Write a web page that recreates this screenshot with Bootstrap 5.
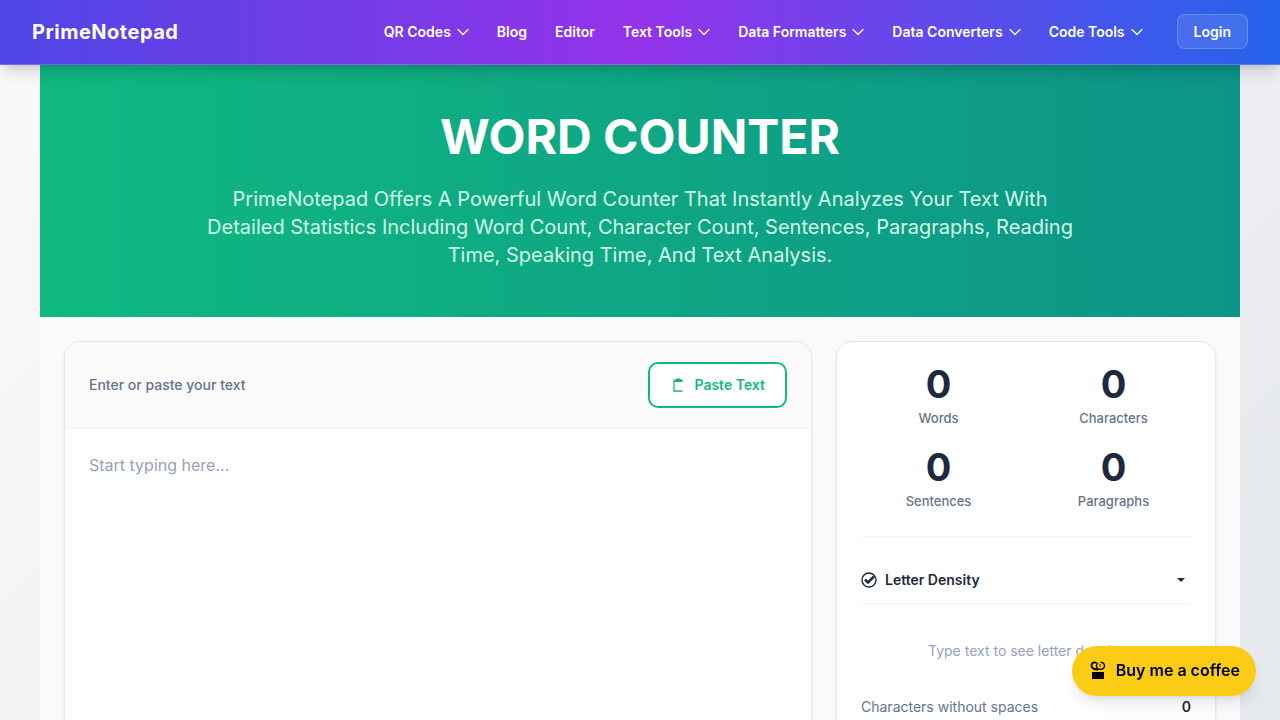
<!DOCTYPE html>
<html lang="en">
<head>
<meta charset="utf-8">
<meta name="viewport" content="width=device-width, initial-scale=1">
<title>Word Counter - PrimeNotepad</title>
<link href="https://cdn.jsdelivr.net/npm/bootstrap@5.3.0/dist/css/bootstrap.min.css" rel="stylesheet">
<style>
  body { font-family: Inter, "Liberation Sans", sans-serif; color: #1e293b; background: linear-gradient(135deg, #fafafa 0%, #e5e8ec 100%); background-attachment: fixed; min-height: 100vh; }
  .site-nav { background: linear-gradient(90deg, #4f46e5, #9333ea 50%, #2563eb); border-bottom: 1px solid rgba(255,255,255,.2); box-shadow: 0 10px 15px -3px rgba(0,0,0,.14), 0 4px 6px -4px rgba(0,0,0,.14); padding: 14px 32px 15px; }
  .site-nav .navbar-brand { font-size: 20px; line-height: 28px; font-weight: 700; letter-spacing: .5px; color: #fff; padding: 0; }
  .menu-link { font-size: 14px; line-height: 20px; font-weight: 600; color: #fff; text-decoration: none; gap: 6px; }
  .menu-list { gap: 28px; }
  .login-btn { font-size: 14px; line-height: 20px; font-weight: 600; color: #fff; padding: 7px 16px 6px; margin-left: 6px; border: 1px solid rgba(255,255,255,.2); border-radius: 8px; background: rgba(255,255,255,.1); }
  .page-shell { max-width: 1200px; background: #f8fafc; }
  .hero { background: linear-gradient(90deg, #10b981, #0d9488); padding: 40px 24px 48px; }
  .hero h1 { font-size: 48px; line-height: 64px; font-weight: 700; }
  .hero p { font-size: 20px; line-height: 28px; color: #d1fae5; max-width: 896px; }
  .tool-panel { border: 1px solid #e5e7eb; border-radius: 16px; box-shadow: 0 1px 3px rgba(0,0,0,.08); background: #fff; }
  .side-col { width: 380px; }
  .editor-head { background: #fafafa; border-bottom: 1px solid #f1f5f9; padding: 20px 24px; }
  .editor-head label { font-size: 14px; line-height: 20px; font-weight: 500; color: #64748b; }
  .paste-btn { font-size: 14px; line-height: 20px; font-weight: 600; color: #10b981; background: #fff; border: 2px solid #10b981; border-radius: 10px; padding: 11px 20px; gap: 8px; }
  .editor-text { min-height: 500px; padding: 24px; font-size: 16px; line-height: 24px; resize: none; outline: 0; }
  .editor-text::placeholder { color: #94a3b8; }
  .stat-num { font-size: 38px; line-height: 36px; font-weight: 700; }
  .stat-name { font-size: 13px; line-height: 19px; font-weight: 500; color: #64748b; margin-top: 7px; }
  .stats-block { padding-bottom: 24px; border-bottom: 1px solid #f1f5f9; }
  .stats-grid { --bs-gutter-x: 20px; row-gap: 21px; padding-bottom: 1px; }
  .density-btn { font-size: 14px; line-height: 20px; font-weight: 600; color: #1e293b; background: transparent; border: 0; border-bottom: 1px solid #f1f5f9; padding: 13px 0; margin-top: 20px; }
  .density-empty { font-size: 14px; line-height: 20px; color: #94a3b8; padding: 37px 0 36px; }
  .detail-row { font-size: 14px; line-height: 20px; color: #64748b; }
  .detail-row dt { font-weight: 400; }
  .detail-row dd { font-weight: 600; color: #1e293b; }
  .coffee-btn { right: 24px; bottom: 24px; z-index: 1040; font-size: 16px; line-height: 24px; font-weight: 600; color: #000; background: #facc15; padding: 12px 16px 14px; gap: 8px; box-shadow: 0 10px 15px -3px rgba(0,0,0,.1), 0 4px 6px -4px rgba(0,0,0,.1); }
</style>
</head>
<body>
<svg class="d-none">
  <symbol id="chevron" viewBox="0 0 12 12"><path d="M1 3.5l5 5 5-5" fill="none" stroke="currentColor" stroke-width="1.3" stroke-linecap="round" stroke-linejoin="round"/></symbol>
</svg>
<nav class="site-nav sticky-top d-flex align-items-center justify-content-between">
  <a class="navbar-brand m-0" href="#">PrimeNotepad</a>
  <div class="menu-list d-flex align-items-center">
    <a class="menu-link d-flex align-items-center" href="#">QR Codes <svg width="12" height="12"><use href="#chevron"/></svg></a>
    <a class="menu-link" href="#">Blog</a>
    <a class="menu-link" href="#">Editor</a>
    <a class="menu-link d-flex align-items-center" href="#">Text Tools <svg width="12" height="12"><use href="#chevron"/></svg></a>
    <a class="menu-link d-flex align-items-center" href="#">Data Formatters <svg width="12" height="12"><use href="#chevron"/></svg></a>
    <a class="menu-link d-flex align-items-center" href="#">Data Converters <svg width="12" height="12"><use href="#chevron"/></svg></a>
    <a class="menu-link d-flex align-items-center" href="#">Code Tools <svg width="12" height="12"><use href="#chevron"/></svg></a>
    <button class="login-btn" type="button">Login</button>
  </div>
</nav>
<main class="page-shell mx-auto">
  <header class="hero text-center text-white">
    <h1 class="mb-3">WORD COUNTER</h1>
    <p class="mx-auto mb-0">PrimeNotepad Offers A Powerful Word Counter That Instantly Analyzes Your Text With Detailed Statistics Including Word Count, Character Count, Sentences, Paragraphs, Reading Time, Speaking Time, And Text Analysis.</p>
  </header>
  <div class="d-flex gap-4 p-4">
    <section class="tool-panel flex-grow-1 overflow-hidden d-flex flex-column">
      <div class="editor-head d-flex align-items-center justify-content-between">
        <label for="words">Enter or paste your text</label>
        <button class="paste-btn d-flex align-items-center" type="button">
          <svg width="16" height="16" viewBox="0 0 16 16" fill="none" stroke="currentColor"><path d="M12 5V3.500H4v10.500h8.500" stroke-width="1.300"/><path d="M5 5V3l2-1.500h3L12 3v2z" fill="currentColor" stroke="none"/></svg>
          Paste Text
        </button>
      </div>
      <textarea id="words" class="editor-text w-100 border-0 flex-grow-1 d-block" placeholder="Start typing here..."></textarea>
    </section>
    <aside class="tool-panel side-col flex-shrink-0 p-4">
      <div class="stats-block">
        <div class="stats-grid row text-center">
          <div class="col-6"><div class="stat-num">0</div><div class="stat-name">Words</div></div>
          <div class="col-6"><div class="stat-num">0</div><div class="stat-name">Characters</div></div>
          <div class="col-6"><div class="stat-num">0</div><div class="stat-name">Sentences</div></div>
          <div class="col-6"><div class="stat-num">0</div><div class="stat-name">Paragraphs</div></div>
        </div>
      </div>
      <button class="density-btn w-100 d-flex align-items-center gap-2" type="button">
        <svg width="16" height="16" viewBox="0 0 16 16" fill="none" stroke="currentColor"><circle cx="8" cy="8" r="7" stroke-width="1.4"/><path d="M4 7.500l3 3L13 4.500" stroke-width="2.500"/></svg>
        Letter Density
        <svg class="ms-auto me-1" width="12" height="12" viewBox="0 0 12 12"><path d="M2 4h8L6 8z" fill="currentColor"/></svg>
      </button>
      <p class="density-empty text-center mb-0">Type text to see letter density</p>
      <dl class="detail-row d-flex justify-content-between mb-0"><dt>Characters without spaces</dt><dd>0</dd></dl>
    </aside>
  </div>
</main>
<a class="coffee-btn position-fixed d-flex align-items-center rounded-pill text-decoration-none" href="#">
  <svg width="20" height="20" viewBox="0 0 20 20"><path d="M4 12h12v7H4z"/><path d="M8.500 3C5.500 1.500 3 3.500 3.500 6s3 3.500 6.500 3.500" fill="none" stroke="#000" stroke-width="1.800"/><path d="M10 3C7.500 4.500 8 8.500 11 9.300c3 .5 5.500-1 5.500-3.300S15 2 12.500 2.500" fill="none" stroke="#000" stroke-width="1.400"/><path d="M12 4v2.500" stroke="#000"/></svg>
  Buy me a coffee
</a>
<script src="https://cdn.jsdelivr.net/npm/bootstrap@5.3.0/dist/js/bootstrap.bundle.min.js"></script>
</body>
</html>
